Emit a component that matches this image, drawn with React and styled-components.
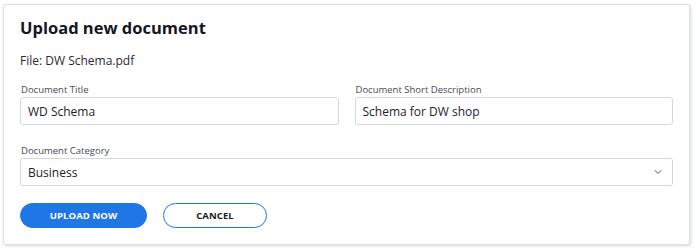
import React from 'react'
import styled, { createGlobalStyle } from 'styled-components'

const GlobalStyle = createGlobalStyle`
  html, body {
    margin: 0;
    padding: 0;
    background: #ffffff;
    font-family: 'Open Sans', 'Liberation Sans', sans-serif;
  }
`

const Page = styled.div`
  padding: 4px 4px 4px 3px;
`

const Card = styled.div`
  width: 687px;
  height: 241px;
  box-sizing: border-box;
  border: 1px solid #dde1e9;
  border-radius: 3px;
  box-shadow: 1px 1px 3px rgba(120, 135, 170, 0.35);
  background: #fff;
  padding: 11px 16px 0 16px;
`

const Title = styled.h2`
  margin: 0;
  font-size: 16.5px;
  font-weight: 700;
  color: #16161e;
  line-height: 24px;
`

const FileName = styled.p`
  margin: 12px 0 0;
  font-size: 12px;
  color: #2a2933;
  line-height: 18px;
`

const Row = styled.div`
  display: grid;
  grid-template-columns: ${(p) => (p.cols === 2 ? '1fr 1fr' : '1fr')};
  gap: 16px;
  margin-top: ${(p) => p.top}px;
`

const Field = styled.div`
  display: flex;
  flex-direction: column;
`

const Label = styled.label`
  font-size: 9.5px;
  color: #4a4a55;
  line-height: 12px;
  margin-left: 1px;
  margin-bottom: 1px;
`

const Input = styled.div`
  height: 28px;
  box-sizing: border-box;
  border: 1px solid #d3d7df;
  border-radius: 3px;
  padding: 0 7px;
  display: flex;
  align-items: center;
  justify-content: space-between;
  font-size: 12px;
  color: #1e1d28;
`

const Chevron = styled.svg`
  width: 12px;
  height: 12px;
  margin-right: 1px;
`

const Actions = styled.div`
  display: flex;
  gap: 16px;
  margin-top: 17px;
`

const Button = styled.button`
  height: 25px;
  width: ${(p) => p.w}px;
  border-radius: 13px;
  font-family: 'Open Sans', 'Liberation Sans', sans-serif;
  font-size: 9.5px;
  font-weight: 700;
  letter-spacing: 0.1px;
  border: 1px solid #1f77e5;
  background: ${(p) => (p.primary ? '#1f77e5' : '#fff')};
  color: ${(p) => (p.primary ? '#fff' : '#1b1b24')};
  padding: 0;
  cursor: pointer;
`

export default function App() {
  return (
    <>
      <GlobalStyle />
      <Page>
        <Card>
          <Title>Upload new document</Title>
          <FileName>File: DW Schema.pdf</FileName>
          <Row cols={2} top={14}>
            <Field>
              <Label>Document Title</Label>
              <Input>WD Schema</Input>
            </Field>
            <Field>
              <Label>Document Short Description</Label>
              <Input>Schema for DW shop</Input>
            </Field>
          </Row>
          <Row cols={1} top={20}>
            <Field>
              <Label>Document Category</Label>
              <Input>
                Business
                <Chevron viewBox="0 0 24 24" fill="none" stroke="#555" strokeWidth="2" strokeLinecap="round" strokeLinejoin="round">
                  <path d="M6 9l6 6 6-6" />
                </Chevron>
              </Input>
            </Field>
          </Row>
          <Actions>
            <Button primary w={127}>UPLOAD NOW</Button>
            <Button w={104}>CANCEL</Button>
          </Actions>
        </Card>
      </Page>
    </>
  )
}
